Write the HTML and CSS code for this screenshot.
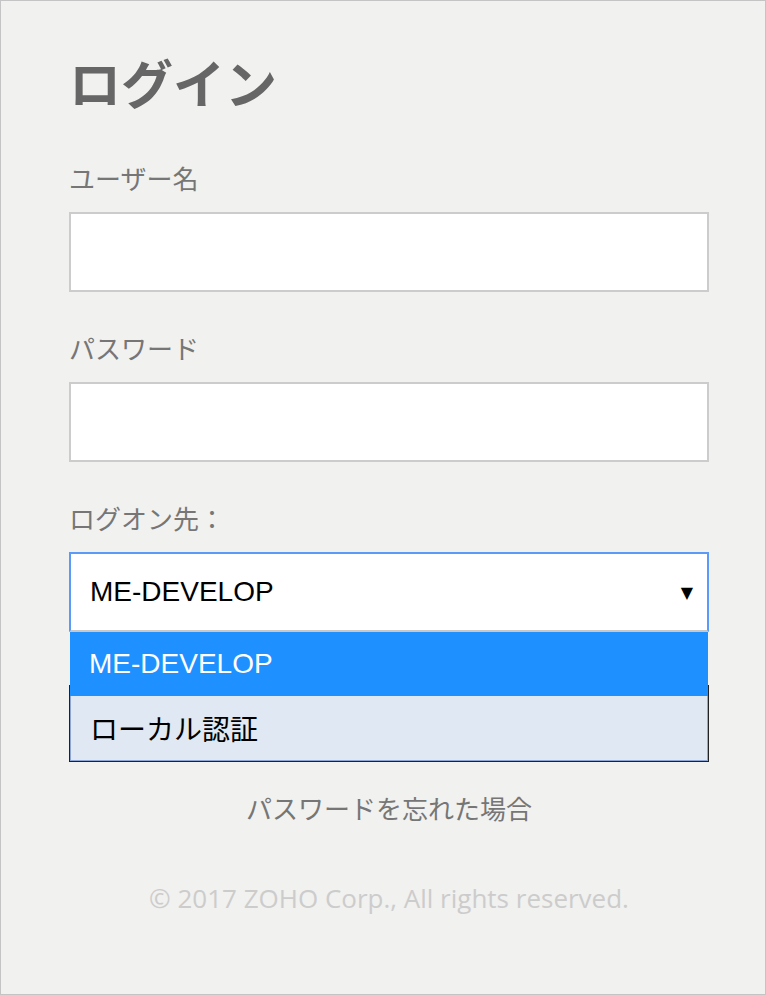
FILE: index.html
```html
<!DOCTYPE html>
<html lang="ja">
<head>
<meta charset="utf-8">
<title>ログイン</title>
<link rel="stylesheet" href="styles.css">
</head>
<body>
<div class="frame">
  <main class="login">
    <h1 class="title">ログイン</h1>
    <div class="field">
      <label class="label">ユーザー名</label>
      <div class="input"></div>
    </div>
    <div class="field">
      <label class="label">パスワード</label>
      <div class="input"></div>
    </div>
    <div class="field">
      <label class="label">ログオン先：</label>
      <div class="select-wrap">
        <div class="select">
          <span class="select-value">ME-DEVELOP</span>
          <span class="select-arrow">▼</span>
        </div>
        <ul class="options">
          <li class="option selected">ME-DEVELOP</li>
          <li class="option">ローカル認証</li>
        </ul>
      </div>
    </div>
    <div class="button-shadow"></div>
    <a class="forgot">パスワードを忘れた場合</a>
    <p class="copyright">© 2017 ZOHO Corp., All rights reserved.</p>
  </main>
</div>
</body>
</html>
```
FILE: styles.css
```css
html, body {
  margin: 0;
  padding: 0;
}
body {
  width: 766px;
  height: 995px;
  overflow: hidden;
  font-family: "Noto Sans CJK JP", "Noto Sans", sans-serif;
}
.frame {
  box-sizing: border-box;
  width: 766px;
  height: 995px;
  border: 1px solid #c4c4c4;
  background: #f1f1ef;
}
.login {
  display: flex;
  flex-direction: column;
  width: 640px;
  padding: 41px 0 0 68px;
}
.title {
  margin: 0;
  font-size: 52px;
  line-height: 80px;
  font-weight: 700;
  color: #666666;
}
.field {
  display: flex;
  flex-direction: column;
  margin-top: 38px;
}
.label {
  font-size: 26px;
  line-height: 36px;
  color: #767676;
  margin-bottom: 16px;
}
.input {
  box-sizing: border-box;
  height: 80px;
  background: #ffffff;
  border: 2px solid #cccccc;
}
.select-wrap {
  position: relative;
}
.select {
  box-sizing: border-box;
  height: 80px;
  background: #ffffff;
  border: 2px solid #5b9af7;
  border-bottom-color: #c8c8c8;
  display: flex;
  align-items: center;
  justify-content: space-between;
  padding: 0 14px 0 19px;
}
.select-value {
  font-family: "Liberation Sans", Arial, sans-serif;
  font-size: 28px;
  color: #000000;
}
.select-arrow {
  font-family: "DejaVu Sans", sans-serif;
  font-size: 16px;
  color: #000000;
}
.options {
  position: absolute;
  left: 1px;
  right: 1px;
  top: 80px;
  margin: 0;
  padding: 0;
  list-style: none;
  background: #dfe8f3;
  border: 1px solid #8ea6d6;
  border-top: none;
  z-index: 2;
}
.option {
  height: 64px;
  display: flex;
  align-items: center;
  padding-left: 19px;
  font-family: "Liberation Sans", Arial, "Noto Sans CJK JP", sans-serif;
  font-size: 28px;
  color: #000000;
}
.option.selected {
  background: #1e90ff;
  color: #ffffff;
  margin-left: -1px;
  margin-right: -1px;
}
.button-shadow {
  box-sizing: border-box;
  height: 77px;
  margin-top: 53px;
  border: 1px solid #222222;
  border-top: none;
}
.forgot {
  align-self: center;
  margin-top: 28px;
  font-size: 26px;
  line-height: 36px;
  color: #767676;
}
.copyright {
  margin: 56px 0 0;
  text-align: center;
  font-family: "Open Sans", sans-serif;
  font-size: 26px;
  line-height: 32px;
  color: #cccccc;
}
```
